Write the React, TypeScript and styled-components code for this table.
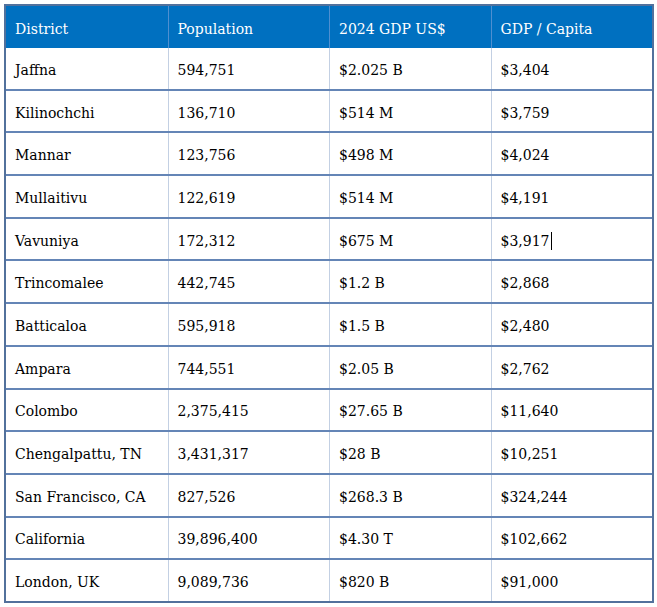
import React from 'react';
import styled, { createGlobalStyle } from 'styled-components';

const rows = [
  ['Jaffna', '594,751', '$2.025 B', '$3,404'],
  ['Kilinochchi', '136,710', '$514 M', '$3,759'],
  ['Mannar', '123,756', '$498 M', '$4,024'],
  ['Mullaitivu', '122,619', '$514 M', '$4,191'],
  ['Vavuniya', '172,312', '$675 M', '$3,917'],
  ['Trincomalee', '442,745', '$1.2 B', '$2,868'],
  ['Batticaloa', '595,918', '$1.5 B', '$2,480'],
  ['Ampara', '744,551', '$2.05 B', '$2,762'],
  ['Colombo', '2,375,415', '$27.65 B', '$11,640'],
  ['Chengalpattu, TN', '3,431,317', '$28 B', '$10,251'],
  ['San Francisco, CA', '827,526', '$268.3 B', '$324,244'],
  ['California', '39,896,400', '$4.30 T', '$102,662'],
  ['London, UK', '9,089,736', '$820 B', '$91,000'],
];

const headers = ['District', 'Population', '2024 GDP US$', 'GDP / Capita'];

const App = () => {
  return (
    <>
      <GlobalStyle />
      <Wrapper>
        <Table>
          <HeaderRow>
            {headers.map((h) => (
              <HeaderCell key={h}>{h}</HeaderCell>
            ))}
          </HeaderRow>
          {rows.map((r, i) => (
            <Row key={r[0]} last={i === rows.length - 1}>
              {r.map((c, j) => (
                <Cell key={j}>
                  {c}
                  {r[0] === 'Vavuniya' && j === 3 && <Caret />}
                </Cell>
              ))}
            </Row>
          ))}
        </Table>
      </Wrapper>
    </>
  );
};

export default App;

const GlobalStyle = createGlobalStyle`
  body {
    margin: 0;
    background: #fff;
    font-family: "DejaVu Serif", "Liberation Serif", serif;
  }
`;

const Wrapper = styled.div`
  padding: 4px 3px 0 4px;
`;

const Table = styled.div`
  width: 650px;
  border: 2px solid #52719c;
  box-sizing: border-box;
`;

const HeaderRow = styled.div`
  display: grid;
  grid-template-columns: repeat(4, 1fr);
  height: 42px;
  background: #0070c0;
`;

const HeaderCell = styled.div`
  display: flex;
  align-items: center;
  padding: 3px 9px 0 9px;
  color: #fff;
  font-size: 14px;
  border-left: 1px solid #4f8fd0;
  &:first-child {
    border-left: none;
  }
`;

const Row = styled.div<{ last?: boolean }>`
  display: grid;
  grid-template-columns: repeat(4, 1fr);
  height: ${(p) => (p.last ? '40.7px' : '42.7px')};
  box-sizing: border-box;
  border-bottom: ${(p) => (p.last ? 'none' : '2px solid #6485b6')};
`;

const Cell = styled.div`
  display: flex;
  align-items: center;
  padding: 3px 9px 0 9px;
  color: #000;
  font-size: 14px;
  border-left: 1px solid #c3d0e3;
  &:first-child {
    border-left: none;
  }
`;

const Caret = styled.span`
  display: inline-block;
  width: 1.5px;
  height: 18px;
  margin-left: 1px;
  background: #000;
`;
